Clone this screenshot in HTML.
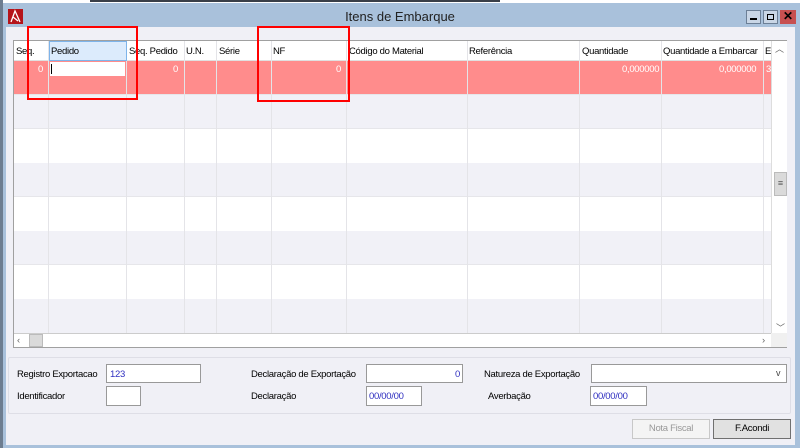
<!DOCTYPE html><html><head><style>
*{margin:0;padding:0;box-sizing:border-box}
body{width:800px;height:448px;overflow:hidden;background:#a9c1db;font-family:"Liberation Sans",sans-serif;font-size:9.5px;color:#000;position:relative}
.a{position:absolute}
.t{letter-spacing:-0.3px;white-space:nowrap}
</style></head><body>
<div class="a" style="left:0;top:0;width:800px;height:3px;background:#fff"></div>
<div class="a" style="left:90px;top:0;width:410px;height:2px;background:#3a3f48"></div>
<div class="a" style="left:0;top:0;width:3px;height:448px;background:#6d7d90"></div>
<!-- title -->
<svg class="a" style="left:8px;top:9px" width="15" height="15"><rect width="15" height="15" fill="#b5141a"/><path d="M3 13 L7 2 L12 13 M5 8 L10 12" stroke="#fff" stroke-width="1.3" fill="none"/></svg>
<div class="a t" style="left:0;width:800px;top:9px;text-align:center;font-size:13px;color:#222;letter-spacing:0">Itens de Embarque</div>
<div class="a" style="left:746px;top:10px;width:15px;height:14px;background:#c9d6e6;border:1px solid #6c7f96"><div class="a" style="left:3px;top:7px;width:7px;height:2px;background:#000"></div></div>
<div class="a" style="left:763px;top:10px;width:15px;height:14px;background:#c9d6e6;border:1px solid #6c7f96"><div class="a" style="left:3px;top:3px;width:7px;height:6px;border:1.5px solid #000"></div></div>
<div class="a" style="left:780px;top:10px;width:16px;height:14px;background:#c75050;color:#000;font-size:12px;font-weight:bold;text-align:center;line-height:13px">✕</div>
<!-- client -->
<div class="a" style="left:6px;top:27px;width:789px;height:418px;background:#f0f0f6"></div>
<!-- grid -->
<div class="a" style="left:13px;top:40px;width:774px;height:308px;border:1px solid #a0a0a0;background:#fff"></div>
<div class="a" style="left:14px;top:41px;width:757px;height:20px;background:#fff;border-bottom:1px solid #e0e0e0"></div>
<div class="a" style="left:14px;top:61px;width:757px;height:34px;background:#ff8c8c"></div>
<div class="a" style="left:14px;top:95px;width:757px;height:34px;background:#f1f1f7"></div>
<div class="a" style="left:14px;top:163px;width:757px;height:34px;background:#f1f1f7"></div>
<div class="a" style="left:14px;top:231px;width:757px;height:34px;background:#f1f1f7"></div>
<div class="a" style="left:14px;top:299px;width:757px;height:34px;background:#f1f1f7"></div>
<div class="a" style="left:14px;top:128px;width:757px;height:1px;background:#e6e6ea"></div>
<div class="a" style="left:14px;top:196px;width:757px;height:1px;background:#e6e6ea"></div>
<div class="a" style="left:14px;top:264px;width:757px;height:1px;background:#e6e6ea"></div>
<div class="a" style="left:14px;top:94px;width:757px;height:1px;background:#e6e6ea"></div>
<!-- column lines -->
<div class="a" style="left:48px;top:41px;width:1px;height:292px;background:#e4e4e8"></div>
<div class="a" style="left:126px;top:41px;width:1px;height:292px;background:#e4e4e8"></div>
<div class="a" style="left:184px;top:41px;width:1px;height:292px;background:#e4e4e8"></div>
<div class="a" style="left:216px;top:41px;width:1px;height:292px;background:#e4e4e8"></div>
<div class="a" style="left:271px;top:41px;width:1px;height:292px;background:#e4e4e8"></div>
<div class="a" style="left:346px;top:41px;width:1px;height:292px;background:#e4e4e8"></div>
<div class="a" style="left:467px;top:41px;width:1px;height:292px;background:#e4e4e8"></div>
<div class="a" style="left:579px;top:41px;width:1px;height:292px;background:#e4e4e8"></div>
<div class="a" style="left:661px;top:41px;width:1px;height:292px;background:#e4e4e8"></div>
<div class="a" style="left:763px;top:41px;width:1px;height:292px;background:#e4e4e8"></div>
<div class="a" style="left:49px;top:41px;width:78px;height:20px;background:#dcebfc;border:1px solid #7eb4ea"></div>
<div class="a t" style="left:16px;top:46px">Seq.</div>
<div class="a t" style="left:51px;top:46px">Pedido</div>
<div class="a t" style="left:129px;top:46px">Seq. Pedido</div>
<div class="a t" style="left:186px;top:46px">U.N.</div>
<div class="a t" style="left:219px;top:46px">Série</div>
<div class="a t" style="left:273px;top:46px">NF</div>
<div class="a t" style="left:349px;top:46px">Código do Material</div>
<div class="a t" style="left:469px;top:46px">Referência</div>
<div class="a t" style="left:582px;top:46px">Quantidade</div>
<div class="a t" style="left:663px;top:46px">Quantidade a Embarcar</div>
<div class="a t" style="left:765px;top:46px">E</div>
<div class="a t" style="left:38px;top:64px;color:#fff">0</div>
<div class="a" style="left:50px;top:62px;width:75px;height:14px;background:#fff"><div class="a" style="left:1px;top:2px;width:1px;height:10px;background:#000"></div></div>
<div class="a t" style="left:173px;top:64px;color:#fff">0</div>
<div class="a t" style="left:336px;top:64px;color:#fff">0</div>
<div class="a t" style="left:622px;top:64px;color:#fff">0,000000</div>
<div class="a t" style="left:719px;top:64px;color:#fff">0,000000</div>
<div class="a t" style="left:766px;top:64px;color:#fff">30</div>
<!-- red boxes -->
<div class="a" style="left:27px;top:26px;width:111px;height:74px;border:2px solid #f00"></div>
<div class="a" style="left:257px;top:26px;width:93px;height:76px;border:2px solid #f00"></div>
<!-- scrollbars -->
<div class="a" style="left:771px;top:41px;width:16px;height:292px;background:#fff;border-left:1px solid #ddd"></div>
<div class="a t" style="left:775px;top:42px;color:#666;font-size:9px">︿</div>
<div class="a" style="left:774px;top:172px;width:13px;height:24px;background:#dadada;border:1px solid #bbb;text-align:center;font-size:9px;line-height:20px;color:#555">≡</div>
<div class="a t" style="left:776px;top:321px;color:#666;font-size:9px">﹀</div>
<div class="a" style="left:14px;top:333px;width:757px;height:14px;background:#fff;border-top:1px solid #ccc"></div>
<div class="a" style="left:29px;top:334px;width:14px;height:13px;background:#dadada;border:1px solid #bbb"></div>
<div class="a t" style="left:17px;top:335px;color:#666">‹</div>
<div class="a t" style="left:762px;top:335px;color:#666">›</div>
<div class="a" style="left:771px;top:333px;width:16px;height:14px;background:#f0f0f0"></div>
<!-- bottom panel -->
<div class="a" style="left:8px;top:357px;width:783px;height:57px;border:1px solid #dedee6;border-radius:2px"></div>
<div class="a t" style="left:17px;top:369px">Registro Exportacao</div>
<div class="a" style="left:106px;top:364px;width:95px;height:19px;background:#fff;border:1px solid #999"></div>
<div class="a t" style="left:110px;top:369px;color:#3030c0">123</div>
<div class="a t" style="left:251px;top:369px">Declaração de Exportação</div>
<div class="a" style="left:366px;top:364px;width:97px;height:19px;background:#fff;border:1px solid #999"></div>
<div class="a t" style="left:455px;top:369px;color:#3030c0">0</div>
<div class="a t" style="left:484px;top:369px">Natureza de Exportação</div>
<div class="a" style="left:591px;top:364px;width:196px;height:19px;background:#fff;border:1px solid #999"></div>
<div class="a t" style="left:776px;top:368px;color:#444;font-size:9px">v</div>
<div class="a t" style="left:17px;top:391px">Identificador</div>
<div class="a" style="left:106px;top:386px;width:35px;height:20px;background:#fff;border:1px solid #999"></div>
<div class="a t" style="left:251px;top:391px">Declaração</div>
<div class="a" style="left:366px;top:386px;width:56px;height:20px;background:#fff;border:1px solid #999"></div>
<div class="a t" style="left:369px;top:391px;color:#3030c0">00/00/00</div>
<div class="a t" style="left:488px;top:391px">Averbação</div>
<div class="a" style="left:590px;top:386px;width:57px;height:20px;background:#fff;border:1px solid #999"></div>
<div class="a t" style="left:593px;top:391px;color:#3030c0">00/00/00</div>
<!-- buttons -->
<div class="a t" style="left:632px;top:419px;width:78px;height:20px;border:1px solid #c8c8c8;background:#f4f4f4;color:#999;text-align:center;line-height:18px">Nota Fiscal</div>
<div class="a t" style="left:713px;top:419px;width:78px;height:20px;border:1px solid #707070;background:#e1e1e1;text-align:center;line-height:18px">F.Acondi</div>
</body></html>
